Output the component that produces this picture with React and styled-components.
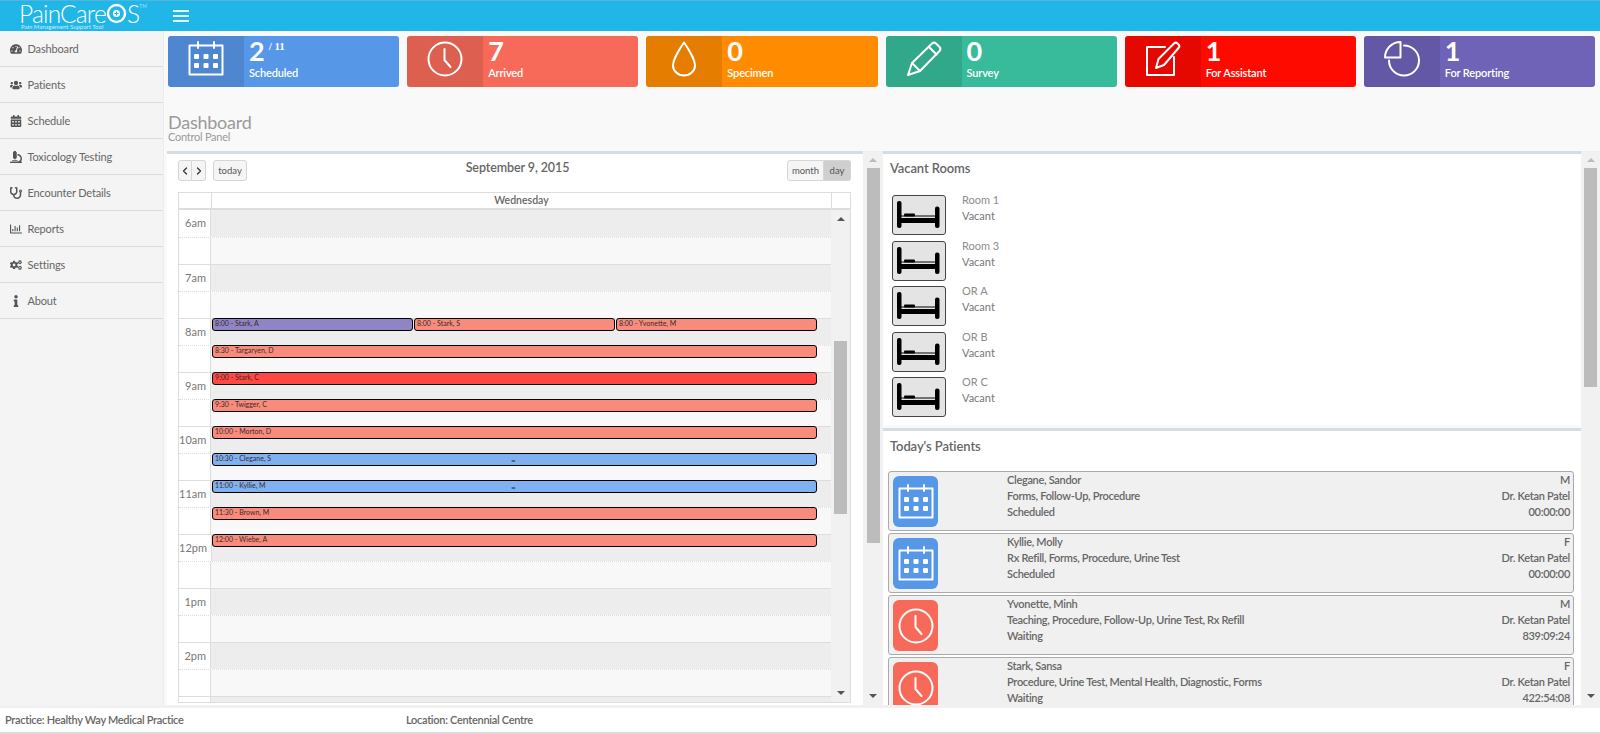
import React from "react";
import styled, { createGlobalStyle } from "styled-components";
import { ChevronLeft, ChevronRight } from "lucide-react";
import {
  FaTachometerAlt,
  FaUsers,
  FaCalendarAlt,
  FaMicroscope,
  FaStethoscope,
  FaRegChartBar,
  FaCogs,
  FaInfo,
} from "react-icons/fa";

const GlobalStyle = createGlobalStyle`
  html, body { margin: 0; padding: 0; height: 100%; }
  body { font-family: Lato, "Open Sans", sans-serif; background: #f9f9f9; overflow: hidden; }
  * { box-sizing: border-box; }
`;

// Icons
const Svg = styled.svg`
  display: block;
  fill: none;
  stroke: #fff;
  stroke-width: 2;
  stroke-linejoin: round;
  stroke-linecap: round;
`;

const CalendarIcon = () => (
  <Svg width="36" height="36" viewBox="0 0 36 36">
    <rect x="1.5" y="4.5" width="33" height="29" />
    <path d="M10 1v6M26 1v6" />
    <g fill="#fff" stroke="none">
      <rect x="6" y="13" width="5" height="5" rx="1" />
      <rect x="15.5" y="13" width="5" height="5" rx="1" />
      <rect x="25" y="13" width="5" height="5" rx="1" />
      <rect x="6" y="22" width="5" height="5" rx="1" />
      <rect x="15.5" y="22" width="5" height="5" rx="1" />
      <rect x="25" y="22" width="5" height="5" rx="1" />
    </g>
  </Svg>
);

const ClockIcon = () => (
  <Svg width="36" height="36" viewBox="0 0 36 36">
    <circle cx="18" cy="18" r="16.5" />
    <path d="M17.5 8v11l6 7" />
  </Svg>
);

const DropIcon = () => (
  <Svg width="36" height="36" viewBox="0 0 36 36">
    <path d="M18 1.5C18 1.5 7 17 7 24.5a11 10 0 0 0 22 0C29 17 18 1.5 18 1.5Z" />
  </Svg>
);

const PencilIcon = () => (
  <Svg width="36" height="36" viewBox="0 0 36 36">
    <path d="M2 34l4-12L26 2.5a3 3 0 0 1 4 0l3.5 3.5a3 3 0 0 1 0 4L14 30Z" />
    <path d="M23 6l7.5 7.5M6 22l8 8" />
  </Svg>
);

const ComposeIcon = () => (
  <Svg width="36" height="36" viewBox="0 0 36 36">
    <path d="M20 6H2v28h27V16" />
    <path d="M11 27l2.5-9L29 2.5a2.5 2.5 0 0 1 3.5 0l1 1a2.5 2.5 0 0 1 0 3.5L19 24Z" />
  </Svg>
);

const PieIcon = () => (
  <Svg width="36" height="36" viewBox="0 0 36 36">
    <path d="M20 4.5a15 15 0 1 1-15 15" />
    <path d="M16.5 1v15.5H1A15.500 15.500 0 0 1 16.500 1Z" />
  </Svg>
);

const BedSvg = styled.svg`
  display: block;
  fill: #000;
`;

const BedIcon = () => (
  <BedSvg width="51" height="38" viewBox="0 0 51 38">
    <rect x="4" y="5" width="4.500" height="27" rx="2" />
    <rect x="42" y="10.500" width="4.500" height="21.500" rx="2" />
    <rect x="6" y="22" width="38" height="5" />
    <rect x="8" y="19.500" width="35" height="1" />
    <rect x="11" y="17.500" width="11" height="3" rx="1" />
  </BedSvg>
);

// Top bar
const Page = styled.div`
  display: flex;
  flex-direction: column;
  height: 734px;
`;

const TopBar = styled.header`
  display: flex;
  align-items: center;
  flex: 0 0 31px;
  background: #21b6e8;
  border-top: 1px solid #56b4d8;
  color: #fff;
`;

const Logo = styled.div`
  display: flex;
  flex-direction: column;
  width: 173px;
  padding: 1px 0 0 19px;
`;

const LogoMark = styled.div`
  display: flex;
  align-items: center;
  height: 21px;
  font-size: 24.500px;
  font-weight: 300;
  line-height: 21px;
  letter-spacing: -0.8px;
`;

const LogoSup = styled.span`
  align-self: flex-start;
  font-size: 5px;
  line-height: 6px;
  letter-spacing: 0;
`;

const Tagline = styled.div`
  padding-left: 2px;
  font-size: 6px;
  line-height: 6px;
  color: #cdeefa;
`;

const Burger = styled.div`
  display: flex;
  flex-direction: column;
  gap: 3px;
  width: 16px;
  span {
    height: 2px;
    background: #e6f8fd;
  }
`;

// Body
const Body = styled.div`
  display: flex;
  flex: 1;
  min-height: 0;
`;

const Sidebar = styled.nav`
  flex: 0 0 164px;
  background: #f4f4f4;
  border-right: 1px solid #ececec;
`;

const NavItem = styled.div`
  display: flex;
  align-items: center;
  height: 36px;
  padding-left: 10px;
  border-bottom: 1px solid #dcdcdc;
  font-size: 11px;
  letter-spacing: -0.15px;
  color: #666;
`;

const NavIcon = styled.span`
  display: flex;
  flex: 0 0 17.500px;
  color: #555;
  svg {
    width: 12px;
    height: 12px;
  }
`;

const Main = styled.main`
  display: flex;
  flex-direction: column;
  flex: 1;
  min-width: 0;
`;

const StatRow = styled.div`
  display: grid;
  grid-template-columns: repeat(6, 1fr);
  gap: 8px;
  padding: 5px 5px 0 4px;
`;

const StatCard = styled.div`
  display: flex;
  height: 51px;
  border-radius: 3px;
  overflow: hidden;
  background: ${(p) => p.$color};
  color: #fff;
`;

const StatIcon = styled.div`
  display: flex;
  justify-content: center;
  flex: 0 0 76px;
  padding-top: 5px;
  background: rgba(0, 0, 0, 0.1);
`;

const StatText = styled.div`
  padding: 0 0 0 5px;
`;

const StatValue = styled.div`
  display: flex;
  height: 30px;
  font-size: 27px;
  font-weight: 700;
  line-height: 30px;
`;

const StatTotal = styled.span`
  margin: 2px 0 0 4px;
  font-size: 11px;
  font-weight: 700;
  line-height: 16px;
  font-family: "Liberation Serif", serif;
`;

const StatLabel = styled.div`
  font-size: 11px;
  font-weight: 600;
  line-height: 14px;
  letter-spacing: -0.15px;
`;

const PageHeading = styled.div`
  flex: 0 0 64px;
  padding: 26px 0 0 4px;
`;

const PageTitle = styled.h1`
  margin: 0;
  font-size: 18px;
  font-weight: 400;
  line-height: 18px;
  letter-spacing: -0.25px;
  color: #9a9a9a;
`;

const PageSub = styled.div`
  font-size: 11px;
  line-height: 11px;
  letter-spacing: -0.25px;
  color: #999;
`;

const Panels = styled.div`
  display: flex;
  flex: 1;
  min-height: 0;
  padding-left: 3px;
`;

const Box = styled.section`
  background: #fff;
  border-top: 3px solid #d5dde3;
  overflow: hidden;
`;

const CalendarBox = styled(Box)`
  display: flex;
  flex-direction: column;
  flex: 0 0 696px;
  padding: 6px 12px 2px 11px;
`;

const Toolbar = styled.div`
  display: grid;
  grid-template-columns: 1fr auto 1fr;
  flex: 0 0 21px;
  margin-bottom: 11px;
`;

const ToolGroup = styled.div`
  display: flex;
  justify-content: ${(p) => (p.$end ? "flex-end" : "flex-start")};
`;

const ButtonGroup = styled.div`
  display: flex;
  margin-right: 7px;
`;

const ToolButton = styled.div`
  display: flex;
  align-items: center;
  justify-content: center;
  width: ${(p) => p.$width}px;
  height: 21px;
  background: ${(p) => (p.$active ? "#cfcfcf" : "#f5f5f5")};
  border: 1px solid #d6d6d6;
  border-radius: ${(p) => p.$radius || "3px"};
  font-size: 9.500px;
  color: #555;
  & + & {
    border-left: 0;
  }
`;

const CalendarTitle = styled.h2`
  margin: -1px 0 0 6px;
  font-size: 12.500px;
  font-weight: 600;
  line-height: 18px;
  letter-spacing: -0.1px;
  color: #666;
  text-align: center;
`;

const CalTable = styled.div`
  display: flex;
  flex-direction: column;
  flex: 1;
  min-height: 0;
  border: 1px solid #ddd;
`;

const CalHead = styled.div`
  display: grid;
  grid-template-columns: 32px 1fr 19px;
  flex: 0 0 17px;
  border-bottom: 2px solid #ddd;
  font-size: 10.500px;
  font-weight: 600;
  line-height: 15px;
  color: #666;
  text-align: center;
  div + div {
    border-left: 1px solid #ddd;
  }
`;

const CalBody = styled.div`
  display: flex;
  flex: 1;
  min-height: 0;
  overflow: hidden;
`;

const CalGrid = styled.div`
  position: relative;
  flex: 1;
  min-width: 0;
`;

const SlotRow = styled.div`
  display: flex;
  height: 27px;
  border-top: ${(p) => (p.$hour ? "1px solid #ddd" : "1px dotted #ddd")};
  &:first-child {
    border-top: 0;
  }
`;

const SlotLabel = styled.div`
  flex: 0 0 32px;
  padding-right: 4px;
  border-right: 1px solid #ddd;
  font-size: 11px;
  line-height: 26px;
  color: #777;
  text-align: right;
`;

const SlotCell = styled.div`
  flex: 1;
  background: ${(p) => (p.$hour ? "#ededed" : "#f8f8f8")};
`;

const CalEvent = styled.div`
  position: absolute;
  top: ${(p) => p.$top}px;
  left: ${(p) => 33 + p.$col * 202}px;
  width: ${(p) => (p.$span ? 605 : 201)}px;
  height: 13px;
  padding-left: 2px;
  background: ${(p) => p.$color};
  border: 1.500px solid #000;
  border-radius: 3px;
  font-size: 7px;
  line-height: 8px;
  color: #3a2a2a;
  white-space: nowrap;
`;

const EventGrip = styled.span`
  position: absolute;
  left: 298px;
  top: 2px;
  font-size: 8px;
  font-weight: 700;
  line-height: 8px;
  color: #222;
`;

const ScrollTrack = styled.div`
  display: flex;
  flex-direction: column;
  align-items: center;
  flex: 0 0 ${(p) => p.$width}px;
  padding-bottom: 7px;
  background: #f1f1f1;
`;

const ArrowUp = styled.div`
  display: flex;
  align-items: center;
  justify-content: center;
  flex: 0 0 17px;
  width: 100%;
  &::before {
    content: "";
    border-left: 4px solid transparent;
    border-right: 4px solid transparent;
    border-bottom: 4px solid ${(p) => p.$color};
  }
`;

const ArrowDown = styled.div`
  width: 0;
  height: 0;
  margin-top: auto;
  border-left: 4px solid transparent;
  border-right: 4px solid transparent;
  border-top: 4px solid #555;
`;

const ScrollThumb = styled.div`
  flex: 0 0 ${(p) => p.$height}px;
  width: 13px;
  margin-top: ${(p) => p.$offset}px;
  background: #bcbcbc;
`;

const RightColumn = styled.div`
  display: flex;
  flex-direction: column;
  flex: 0 0 698px;
  gap: 3px;
  min-height: 0;
`;

const BoxTitle = styled.h3`
  margin: 0;
  padding-left: 7px;
  font-size: 13px;
  font-weight: 600;
  line-height: 18px;
  letter-spacing: -0.1px;
  color: #666;
`;

const VacantBox = styled(Box)`
  flex: 0 0 274px;
  padding-top: 5px;
`;

const RoomList = styled.div`
  display: flex;
  flex-direction: column;
  gap: 5.500px;
  margin-top: 18px;
  padding-left: 9px;
`;

const RoomRow = styled.div`
  display: flex;
  height: 40px;
`;

const BedTile = styled.div`
  flex: 0 0 54px;
  background: #e4e4e4;
  border: 1.500px solid #444;
  border-radius: 3px;
`;

const RoomText = styled.div`
  margin: -3px 0 0 16px;
  font-size: 11px;
  line-height: 16px;
  color: #777;
  span {
    display: block;
    color: #8c8c8c;
  }
`;

const PatientsBox = styled(Box)`
  flex: 1;
  min-height: 0;
  padding-top: 6px;
`;

const PatientList = styled.div`
  display: flex;
  flex-direction: column;
  gap: 2px;
  margin: 16px 7px 0 5px;
`;

const PatientCard = styled.div`
  display: flex;
  flex: 0 0 60px;
  padding: 4px 3px 0 4px;
  background: #f0f0f0;
  border: 1px solid #aaa;
  border-radius: 3px;
`;

const PatientIcon = styled.div`
  display: flex;
  align-items: center;
  justify-content: center;
  flex: 0 0 45px;
  height: 51px;
  background: ${(p) => p.$color};
  border-radius: 6px;
`;

const PatientInfo = styled.div`
  display: flex;
  flex: 1;
  justify-content: space-between;
  margin: -4px 0 0 69px;
  font-size: 11px;
  font-weight: 600;
  line-height: 16px;
  letter-spacing: -0.3px;
  color: #666;
`;

const PatientRight = styled.div`
  text-align: right;
`;

const Footer = styled.footer`
  display: flex;
  flex: 0 0 29px;
  padding-left: 5px;
  background: #fff;
  border-top: 3px solid #f1f1f1;
  border-bottom: 2px solid #dcdcdc;
  font-size: 11px;
  font-weight: 600;
  line-height: 23px;
  letter-spacing: -0.3px;
  color: #666;
`;

const FooterField = styled.div`
  flex: 0 0 ${(p) => p.$width}px;
`;

const navItems = [
  ["Dashboard", FaTachometerAlt],
  ["Patients", FaUsers],
  ["Schedule", FaCalendarAlt],
  ["Toxicology Testing", FaMicroscope],
  ["Encounter Details", FaStethoscope],
  ["Reports", FaRegChartBar],
  ["Settings", FaCogs],
  ["About", FaInfo],
];

const BLUE = "#5797e8";
const SALMON = "#f76a59";

const stats = [
  { value: "2", total: "/ 11", label: "Scheduled", color: BLUE, Icon: CalendarIcon },
  { value: "7", label: "Arrived", color: SALMON, Icon: ClockIcon },
  { value: "0", label: "Specimen", color: "#ff8c00", Icon: DropIcon },
  { value: "0", label: "Survey", color: "#38bb9b", Icon: PencilIcon },
  { value: "1", label: "For Assistant", color: "#ff0a00", Icon: ComposeIcon },
  { value: "1", label: "For Reporting", color: "#6f63b8", Icon: PieIcon },
];

// the last hour only shows its top edge, its label is below the fold
const hours = ["6am", "7am", "8am", "9am", "10am", "11am", "12pm", "1pm", "2pm", ""];

const EV_SALMON = "#f98b7c";
const EV_BLUE = "#7fb0ef";

const events = [
  { text: "8:00 - Stark, A", top: 108, col: 0, color: "#8f85c5" },
  { text: "8:00 - Stark, S", top: 108, col: 1, color: EV_SALMON },
  { text: "8:00 - Yvonette, M", top: 108, col: 2, color: EV_SALMON },
  { text: "8:30 - Targaryen, D", top: 135, span: true, color: EV_SALMON },
  { text: "9:00 - Stark, C", top: 162, span: true, color: "#ff4844" },
  { text: "9:30 - Twigger, C", top: 189, span: true, color: EV_SALMON },
  { text: "10:00 - Morton, D", top: 216, span: true, color: EV_SALMON },
  { text: "10:30 - Clegane, S", top: 243, span: true, color: EV_BLUE, grip: true },
  { text: "11:00 - Kyllie, M", top: 270, span: true, color: EV_BLUE, grip: true },
  { text: "11:30 - Brown, M", top: 297, span: true, color: EV_SALMON },
  { text: "12:00 - Wiebe, A", top: 324, span: true, color: EV_SALMON },
];

const rooms = ["Room 1", "Room 3", "OR A", "OR B", "OR C"];

const patients = [
  { name: "Clegane, Sandor", visits: "Forms, Follow-Up, Procedure", status: "Scheduled", sex: "M", time: "00:00:00", color: BLUE, Icon: CalendarIcon },
  { name: "Kyllie, Molly", visits: "Rx Refill, Forms, Procedure, Urine Test", status: "Scheduled", sex: "F", time: "00:00:00", color: BLUE, Icon: CalendarIcon },
  { name: "Yvonette, Minh", visits: "Teaching, Procedure, Follow-Up, Urine Test, Rx Refill", status: "Waiting", sex: "M", time: "839:09:24", color: SALMON, Icon: ClockIcon },
  { name: "Stark, Sansa", visits: "Procedure, Urine Test, Mental Health, Diagnostic, Forms", status: "Waiting", sex: "F", time: "422:54:08", color: SALMON, Icon: ClockIcon },
];

export default function App() {
  return (
    <Page>
      <GlobalStyle />
      <TopBar>
        <Logo>
          <LogoMark>
            PainCare
            <svg width="21" height="21" viewBox="0 0 21 21">
              <circle cx="10.500" cy="10.500" r="8.500" fill="none" stroke="#fff" strokeWidth="2.400" />
              <circle cx="10.500" cy="10.500" r="3.500" fill="#fff" />
              <path d="M10.500 8.500v4M8.500 10.500h4" stroke="#21b6e8" strokeWidth="1" />
            </svg>
            S<LogoSup>TM</LogoSup>
          </LogoMark>
          <Tagline>Pain Management Support Tool</Tagline>
        </Logo>
        <Burger>
          <span />
          <span />
          <span />
        </Burger>
      </TopBar>
      <Body>
        <Sidebar>
          {navItems.map(([label, Icon]) => (
            <NavItem key={label}>
              <NavIcon>
                <Icon />
              </NavIcon>
              {label}
            </NavItem>
          ))}
        </Sidebar>
        <Main>
          <StatRow>
            {stats.map(({ value, total, label, color, Icon }) => (
              <StatCard key={label} $color={color}>
                <StatIcon>
                  <Icon />
                </StatIcon>
                <StatText>
                  <StatValue>
                    {value}
                    {total && <StatTotal>{total}</StatTotal>}
                  </StatValue>
                  <StatLabel>{label}</StatLabel>
                </StatText>
              </StatCard>
            ))}
          </StatRow>
          <PageHeading>
            <PageTitle>Dashboard</PageTitle>
            <PageSub>Control Panel</PageSub>
          </PageHeading>
          <Panels>
            <CalendarBox>
              <Toolbar>
                <ToolGroup>
                  <ButtonGroup>
                    <ToolButton $width={14} $radius="3px 0 0 3px">
                      <ChevronLeft size={12} strokeWidth={2.500} color="#333" />
                    </ToolButton>
                    <ToolButton $width={14} $radius="0 3px 3px 0">
                      <ChevronRight size={12} strokeWidth={2.500} color="#333" />
                    </ToolButton>
                  </ButtonGroup>
                  <ToolButton $width={34}>today</ToolButton>
                </ToolGroup>
                <CalendarTitle>September 9, 2015</CalendarTitle>
                <ToolGroup $end>
                  <ToolButton $width={37} $radius="3px 0 0 3px">month</ToolButton>
                  <ToolButton $width={27} $radius="0 3px 3px 0" $active>day</ToolButton>
                </ToolGroup>
              </Toolbar>
              <CalTable>
                <CalHead>
                  <div />
                  <div>Wednesday</div>
                  <div />
                </CalHead>
                <CalBody>
                  <CalGrid>
                    {hours.map((hour) => (
                      <React.Fragment key={hour}>
                        <SlotRow $hour>
                          <SlotLabel>{hour}</SlotLabel>
                          <SlotCell $hour />
                        </SlotRow>
                        <SlotRow>
                          <SlotLabel />
                          <SlotCell />
                        </SlotRow>
                      </React.Fragment>
                    ))}
                    {events.map((ev) => (
                      <CalEvent key={ev.text} $top={ev.top} $col={ev.col || 0} $span={ev.span} $color={ev.color}>
                        {ev.text}
                        {ev.grip && <EventGrip>=</EventGrip>}
                      </CalEvent>
                    ))}
                  </CalGrid>
                  <ScrollTrack $width={19}>
                    <ArrowUp $color="#555" />
                    <ScrollThumb $offset={114} $height={173} />
                    <ArrowDown />
                  </ScrollTrack>
                </CalBody>
              </CalTable>
            </CalendarBox>
            <ScrollTrack $width={20}>
              <ArrowUp $color="#bbb" />
              <ScrollThumb $offset={0} $height={375} />
              <ArrowDown />
            </ScrollTrack>
            <RightColumn>
              <VacantBox>
                <BoxTitle>Vacant Rooms</BoxTitle>
                <RoomList>
                  {rooms.map((room) => (
                    <RoomRow key={room}>
                      <BedTile>
                        <BedIcon />
                      </BedTile>
                      <RoomText>
                        <span>{room}</span>
                        Vacant
                      </RoomText>
                    </RoomRow>
                  ))}
                </RoomList>
              </VacantBox>
              <PatientsBox>
                <BoxTitle>Today's Patients</BoxTitle>
                <PatientList>
                  {patients.map(({ name, visits, status, sex, time, color, Icon }) => (
                    <PatientCard key={name}>
                      <PatientIcon $color={color}>
                        <Icon />
                      </PatientIcon>
                      <PatientInfo>
                        <div>
                          {name}
                          <br />
                          {visits}
                          <br />
                          {status}
                        </div>
                        <PatientRight>
                          {sex}
                          <br />
                          Dr. Ketan Patel
                          <br />
                          {time}
                        </PatientRight>
                      </PatientInfo>
                    </PatientCard>
                  ))}
                </PatientList>
              </PatientsBox>
            </RightColumn>
            <ScrollTrack $width={19}>
              <ArrowUp $color="#bbb" />
              <ScrollThumb $offset={0} $height={219} />
              <ArrowDown />
            </ScrollTrack>
          </Panels>
        </Main>
      </Body>
      <Footer>
        <FooterField $width={401}>Practice: Healthy Way Medical Practice</FooterField>
        <FooterField $width={300}>Location: Centennial Centre</FooterField>
      </Footer>
    </Page>
  );
}
